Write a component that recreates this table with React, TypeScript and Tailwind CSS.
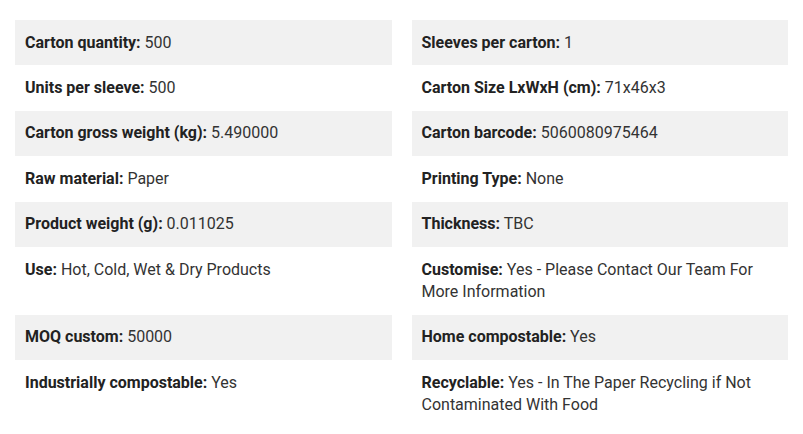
const specs: [string, string][] = [
  ["Carton quantity:", "500"],
  ["Sleeves per carton:", "1"],
  ["Units per sleeve:", "500"],
  ["Carton Size LxWxH (cm):", "71x46x3"],
  ["Carton gross weight (kg):", "5.490000"],
  ["Carton barcode:", "5060080975464"],
  ["Raw material:", "Paper"],
  ["Printing Type:", "None"],
  ["Product weight (g):", "0.011025"],
  ["Thickness:", "TBC"],
  ["Use:", "Hot, Cold, Wet & Dry Products"],
  ["Customise:", "Yes - Please Contact Our Team For More Information"],
  ["MOQ custom:", "50000"],
  ["Home compostable:", "Yes"],
  ["Industrially compostable:", "Yes"],
  ["Recyclable:", "Yes - In The Paper Recycling if Not Contaminated With Food"],
];

export default function App() {
  return (
    <div className="min-h-screen bg-white px-[15px] pt-5 font-['Roboto',sans-serif] text-[16px] leading-[22.4px] text-[#333]">
      <div className="grid grid-cols-2 gap-x-5">
        {specs.map(([label, value], i) => (
          <div
            key={label}
            className={`px-2.5 py-[11.5px] ${Math.floor(i / 2) % 2 === 0 ? "bg-[#f1f1f1]" : "bg-white"}`}
          >
            <span className="font-bold text-[#222]">{label}</span> {value}
          </div>
        ))}
      </div>
    </div>
  );
}
